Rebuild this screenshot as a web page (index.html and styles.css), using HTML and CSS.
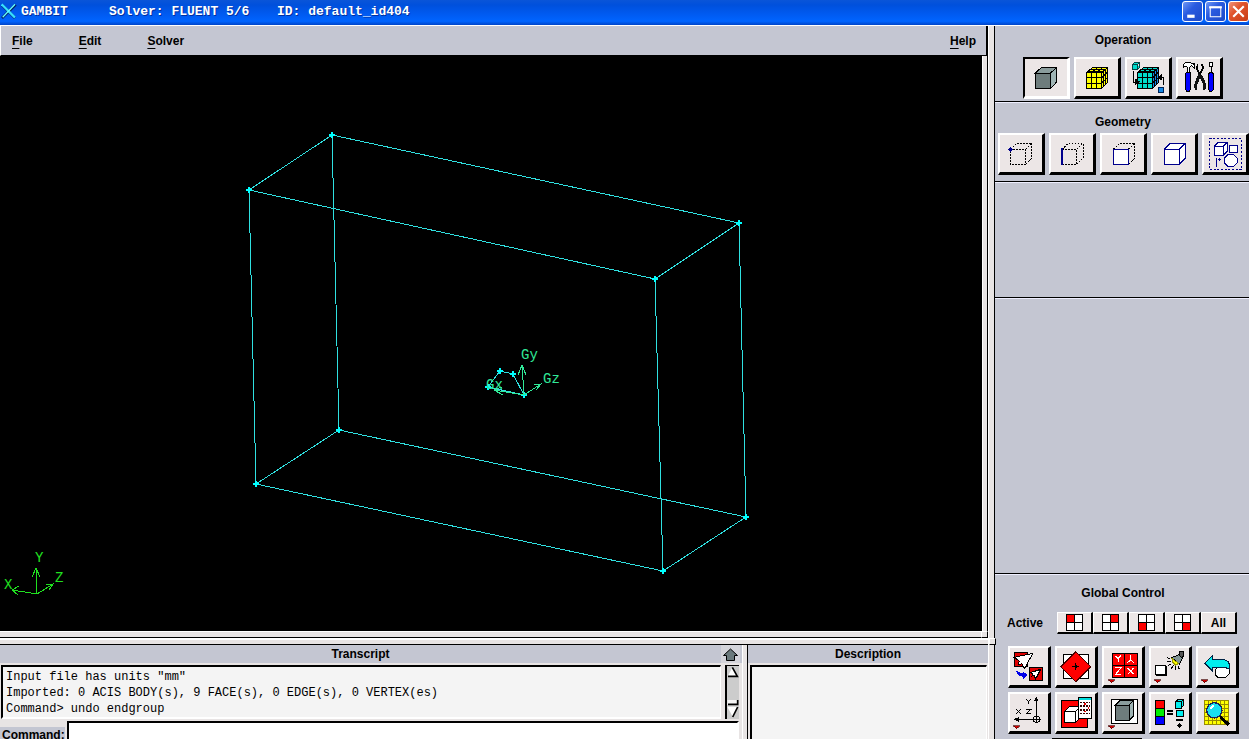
FILE: index.html
```html
<!DOCTYPE html>
<html lang="en">
<head>
<meta charset="utf-8">
<title>GAMBIT</title>
<link rel="stylesheet" href="styles.css">
</head>
<body>
<header class="titlebar">
  <svg class="app-icon" viewBox="3 9 48 48" aria-hidden="true"><path d="M6 15L45 54M47 14L6 54" stroke="#021b5c" stroke-width="8"/><path d="M5 13L45 53" stroke="#35dfff" stroke-width="7"/><path d="M45 13L8 52" stroke="#6ff" stroke-width="4"/></svg>
  <h1 class="app-title"><span class="app-name">GAMBIT</span><span class="app-solver">Solver: FLUENT 5/6</span><span>ID: default_id404</span></h1>
  <div class="window-buttons">
    <button class="win-btn" aria-label="Minimize"><svg viewBox="0 0 18 18"><path d="M4 12h7v3H4z" fill="#fff"/></svg></button>
    <button class="win-btn" aria-label="Maximize"><svg viewBox="0 0 18 18"><path d="M4 5h10v9H4z" fill="none" stroke="#fff"/><path d="M3 4h12v2H3z" fill="#fff"/></svg></button>
    <button class="win-btn close" aria-label="Close"><svg viewBox="0 0 18 18"><path d="M4 4l10 10M14 4L4 14" stroke="#fff" stroke-width="2"/></svg></button>
  </div>
</header>
<div class="workspace">
  <main class="left">
    <nav class="menubar">
      <button class="menu"><u>F</u>ile</button>
      <button class="menu"><u>E</u>dit</button>
      <button class="menu"><u>S</u>olver</button>
      <button class="menu help"><u>H</u>elp</button>
    </nav>
    <div class="viewport">
      <svg class="scene" viewBox="0 56 982 575" preserveAspectRatio="xMinYMin slice" role="img" aria-label="Wireframe box">
        <g class="wire">
          <path d="M332 135L249 190L655 279L739 223ZM339 430L256 484L663 571L746 517ZM332 135L339 430M249 190L256 484M739 223L746 517M655 279L663 571"/>
          <path d="M488 387L500 371L513 374L524 395Z"/>
        </g>
        <path class="vertex" d="M329 135h6M332 132v6M246 190h6M249 187v6M736 223h6M739 220v6M652 279h6M655 276v6M336 430h6M339 427v6M253 484h6M256 481v6M743 517h6M746 514v6M660 571h6M663 568v6M485 387h6M488 384v6M497 371h6M500 368v6M510 374h6M513 371v6M521 395h6M524 392v6"/>
        <path class="axis inner" d="M524 395L522 365M518 375L522 365L526 375M524 395L541 384M534 385L541 384L536 390M524 395L494 390M502 387L494 390L503 395"/>
        <path class="axis" d="M37 594L36 568M32 577L36 568L40 577M37 594L53 584M46 585L53 584L49 590M37 594L12 590M19 586L12 590L18 595"/>
        <g class="axis-text inner-text"><text x="486" y="389">Gx</text><text x="521" y="359">Gy</text><text x="543" y="383">Gz</text></g>
        <g class="axis-text"><text x="35" y="562">Y</text><text x="55" y="582">Z</text><text x="4" y="589">X</text></g>
      </svg>
    </div>
    <div class="sash-row"><span class="grip"></span></div>
    <div class="lower">
      <section class="transcript">
        <div class="panel-head"><h2>Transcript</h2><button class="expand" aria-label="Expand transcript"><svg viewBox="0 0 19 17"><path d="M9.5 3L16.500 9.500H13.500V14.500H5.500V9.500H2.500Z" fill="#6b7a7c" stroke="#000"/></svg></button></div>
        <div class="log-row">
          <pre class="log">Input file has units "mm"
Imported: 0 ACIS BODY(s), 9 FACE(s), 0 EDGE(s), 0 VERTEX(es)
Command&gt; undo endgroup</pre>
          <svg class="scroll" viewBox="75 123 42 162" aria-hidden="true"><path d="M75 123h42v162H75z" fill="#ccc"/><path d="M75 123h6v162h-6zM75 123h42v3H75z" fill="#000"/><path d="M84 156L97 130L112 156Z" fill="#fff"/><path d="M97 130L112 157H84" fill="none" stroke="#000" stroke-width="5"/><path d="M82 228h32v15H82z" fill="#f4f4f4"/><path d="M84 241h29v-13" fill="none" stroke="#000" stroke-width="5"/><path d="M82 248H114L98 278Z" fill="#fff"/><path d="M113 249L98 279" stroke="#000" stroke-width="5"/></svg>
        </div>
        <div class="command-row"><label for="command">Command:</label><input id="command" type="text"></div>
      </section>
      <section class="description">
        <div class="panel-head"><h2>Description</h2></div>
        <div class="desc-box"></div>
      </section>
    </div>
  </main>
  <div class="sash-col"><span class="grip"></span></div>
  <aside class="tools">
    <section class="group operation">
      <h2>Operation</h2>
      <div class="row">
        <button class="tool pressed" aria-label="Geometry"><svg viewBox="30 27 126 111"><g stroke="#000" stroke-width="3"><path d="M61 69H107V115H61Z" fill="#6e7c7c"/><path d="M61 69L80 52H125L107 69Z" fill="#8a9c9c"/><path d="M107 69L125 52V96L107 115Z" fill="#9fb4b4"/></g></svg></button>
        <button class="tool" aria-label="Mesh"><svg viewBox="183 27 126 111"><path d="M215 68L233 52H278V98L260 115H215Z" fill="#ff0"/><path d="M215 68H260V115H215ZM215 83H260L278 66M215 99H260L278 82M230 115V68L248 52M245 115V68L263 52M215 68L233 52H278V98L260 115M260 68L278 52M221 63H266V109M227 57H272V104" class="ink"/></svg></button>
        <button class="tool" aria-label="Zones"><svg viewBox="336 27 126 111"><path d="M368 68L386 52H431V98L413 115H368Z" fill="#00dccc"/><path d="M413 68L431 52V98L413 115Z" fill="#1688e4"/><path d="M368 68H413V115H368ZM368 83H413L431 66M368 99H413L431 82M383 115V68L401 52M398 115V68L416 52M368 68L386 52H431V98L413 115M413 68L431 52M374 63H419V109M380 57H425V104" class="ink"/><path d="M353 43H368V58H353ZL359 37H374L368 43M374 37V52L368 58" fill="#00dccc" stroke="#064444" stroke-width="3"/><path d="M356 62V96H364M446 106V82H438" class="ink"/><path d="M361 86L375 95L361 104ZM440 73L427 82L440 91Z"/><path d="M430 112H446V127H430Z" fill="#1688e4" stroke="#025" stroke-width="3"/></svg></button>
        <button class="tool" aria-label="Tools"><svg viewBox="489 27 126 111"><path d="M505 45L511 38H527L536 43V39H537V53L529 47L524 53V66H517V52L511 48L505 53Z" fill="#fff" stroke="#000" stroke-width="3"/><path d="M513 68H527V118L523 123H515L511 118V73Z" fill="#00f" stroke="#000" stroke-width="3"/><path d="M549 43L545 52L549 64L559 74M559 43L565 51L560 64L550 74" fill="none" stroke="#000" stroke-width="5"/><path d="M550 73L542 90L537 106L540 121H546V105L555 85L565 105V121H571L574 106L568 90L560 74Z" fill="#111"/><path d="M584 38H592V50H584ZM588 50V70" fill="#fff" stroke="#000" stroke-width="3"/><path d="M583 68H593L596 75V118L591 123H584L580 118V75Z" fill="#00f" stroke="#000" stroke-width="3"/></svg></button>
      </div>
    </section>
    <section class="group geometry">
      <h2>Geometry</h2>
      <div class="row">
        <button class="tool" aria-label="Vertex"><svg viewBox="27 75 126 111"><path class="dash" d="M58 118H104V163H58ZM58 118L77 100H122L104 118M122 100V145L104 163"/><path d="M58 111L66 118L58 126L50 118Z" fill="#00008c"/></svg></button>
        <button class="tool" aria-label="Edge"><svg viewBox="180 75 126 111"><path class="dash" d="M213 118H256V163H213M213 118L231 100H276L256 118V163L276 145V100"/><path d="M213 114V164" stroke="#00008c" stroke-width="6"/></svg></button>
        <button class="tool" aria-label="Face"><svg viewBox="333 75 126 111"><path class="dash" d="M368 117L386 100H431L413 117M431 100V145L413 163"/><path class="navy" d="M368 118H413V163H368Z"/></svg></button>
        <button class="tool" aria-label="Volume"><svg viewBox="488 75 126 111"><path class="navy" d="M521 118L539 100H584V145L566 163H521ZM521 118H566V163M566 118L584 100"/></svg></button>
        <button class="tool" aria-label="Group"><svg viewBox="641 75 126 111"><path d="M658 85H752V179H658Z" fill="none" stroke="#00008c" stroke-width="3" stroke-dasharray="6 5"/><path class="navy" d="M671 109L683 97H710V124L698 136H671ZM671 109H698V136M698 109L710 97M718 106H740V127H718ZM713 133H729L740 144V159L729 170H713L703 159V144Z"/><path d="M677 145V171M684 149H692M688 145V153" stroke="#00008c" stroke-width="3"/></svg></button>
      </div>
    </section>
    <section class="group blank-small"></section>
    <section class="group blank-large"></section>
    <section class="group global">
      <h2>Global Control</h2>
      <div class="active-row">
        <span class="active-label">Active</span>
        <button class="quad" aria-label="Top left"><svg viewBox="0 0 17 17"><path d="M.5.5h16v16H.5z" fill="#fff"/><path d="M0 0h8v8H0z" fill="#f00"/><path d="M.5.5h16v16H.5zM8.500 0v17M0 8.500h17" class="thin"/></svg></button>
        <button class="quad" aria-label="Top right"><svg viewBox="0 0 17 17"><path d="M.5.5h16v16H.5z" fill="#fff"/><path d="M9 0h8v8H9z" fill="#f00"/><path d="M.5.5h16v16H.5zM8.500 0v17M0 8.500h17" class="thin"/></svg></button>
        <button class="quad" aria-label="Bottom left"><svg viewBox="0 0 17 17"><path d="M.5.5h16v16H.5z" fill="#fff"/><path d="M0 9h8v8H0z" fill="#f00"/><path d="M.5.5h16v16H.5zM8.500 0v17M0 8.500h17" class="thin"/></svg></button>
        <button class="quad" aria-label="Bottom right"><svg viewBox="0 0 17 17"><path d="M.5.5h16v16H.5z" fill="#fff"/><path d="M9 9h8v8H9z" fill="#f00"/><path d="M.5.5h16v16H.5zM8.500 0v17M0 8.500h17" class="thin"/></svg></button>
        <button class="quad">All</button>
      </div>
      <div class="control-grid">
        <button class="tool small" aria-label="Fit to window"><svg viewBox="27 24 114 111"><path d="M40 38H80V78H40Z" fill="#e00000" stroke="#000" stroke-width="3"/><path d="M39 52L96 40L70 86L63 71L51 74L55 63Z" fill="#fff" stroke="#000" stroke-width="3"/><path d="M85 83H125V121H85Z" fill="#e00000" stroke="#000" stroke-width="3"/><path d="M88 98L119 88L104 117L99 106L93 108L95 102Z" fill="#fff" stroke="#000" stroke-width="3"/><path d="M44 90L54 97L66 101V94L79 105L66 118V110L53 106L48 99Z" fill="#0000e8"/></svg></button>
        <button class="tool small" aria-label="Pivot"><svg viewBox="168 24 114 111"><path d="M188 43H261V116H188Z" fill="#fff" stroke="#000" stroke-width="3"/><path d="M224 35L269 80L224 125L179 80Z" fill="#f00" stroke="#400" stroke-width="3"/><path d="M214 80H234M224 70V90" stroke="#000" stroke-width="3"/><path d="M224 74L230 80L224 86L218 80Z"/></svg></button>
        <button class="tool small" aria-label="Configurations"><svg viewBox="309 24 114 111"><path d="M334 40H408V112H334ZM371 40V112M334 76H408" fill="#f00" stroke="#000" stroke-width="3"/><path d="M343 47L351 56L360 47M351 56V67M389 46V60L378 69M389 60L399 69M343 83H360L343 104H361M380 84L398 103M398 84L380 103" fill="none" stroke="#fff" stroke-width="3"/><path class="drop" d="M321 119H343L332 128Z"/></svg></button>
        <button class="tool small" aria-label="Light"><svg viewBox="453 24 114 111"><path d="M467 75H496V104H467Z" fill="#fff" stroke="#000" stroke-width="3"/><path d="M469 106H499V77" class="ink"/><path d="M515 53L540 43L550 50L538 73Z" fill="#829595" stroke="#000" stroke-width="3"/><path d="M539 34H550V48L544 53L538 46Z" fill="#555" stroke="#000" stroke-width="3"/><path d="M516 56L536 70L527 75L517 66Z" fill="#ff0" stroke="#990" stroke-width="3"/><path d="M511 58L502 53M512 65H501M514 71L504 77M520 76L513 87M527 78L526 91M534 77L538 88" class="ink"/><path class="drop" d="M462 119H484L473 128Z"/></svg></button>
        <button class="tool small" aria-label="Undo"><svg viewBox="594 24 114 111"><path d="M646 89L653 83H667L689 76V100L677 112H654L646 105Z" fill="#fff" stroke="#000" stroke-width="3"/><path d="M614 70L637 47V58H669L684 64L690 77L688 87L674 82H637V92Z" fill="#0ee" stroke="#024" stroke-width="3"/><path class="drop" d="M603 119H625L614 128Z"/></svg></button>
        <button class="tool small" aria-label="Orient"><svg viewBox="27 162 114 111"><path d="M106 174V250M40 238H120M106 228L116 232V244L106 248L96 244V232Z" class="ink"/><path d="M106 169L113 184H99ZM38 238L53 231V245Z"/><path d="M76 178L83 184L90 178M83 184V192M46 208L59 221M59 208L46 221M76 208H90L76 221H91" class="ink"/><path class="drop" d="M36 257H58L47 266Z"/></svg></button>
        <button class="tool small" aria-label="Display attributes"><svg viewBox="168 162 114 111"><path d="M181 181H260V261H181Z" fill="#f00" stroke="#000" stroke-width="3"/><path d="M191 214L205 200H235V236L224 247H191ZM191 214H224V247M224 214L235 203" fill="#fff" stroke="#000" stroke-width="3"/><path d="M233 172H271V235H233Z" fill="#fff" stroke="#000" stroke-width="3"/><path d="M234 173H270V179H234Z" fill="#0dd"/><path d="M237 187H243M237 198H243M237 209H243M237 220H243M246 187H268M246 198H268M246 209H268M246 220H268" stroke="#300" stroke-width="5" stroke-dasharray="6 3"/><path d="M250 192H254M260 203H264M250 214H254" stroke="#e00" stroke-width="5"/></svg></button>
        <button class="tool small" aria-label="Render model"><svg viewBox="309 162 114 111"><path d="M331 179H409V251H331Z" fill="#fff" stroke="#000" stroke-width="3"/><g stroke="#000" stroke-width="3"><path d="M344 195H384V242H344Z" fill="#6e7c7c"/><path d="M344 195L358 181H398L384 195Z" fill="#8a9c9c"/><path d="M384 195L398 181V227L384 242Z" fill="#9fb4b4"/></g><path class="drop" d="M321 257H343L332 266Z"/></svg></button>
        <button class="tool small" aria-label="Color mode"><svg viewBox="453 162 114 111"><g stroke="#000" stroke-width="3"><path d="M467 181H494V205H467Z" fill="#f00"/><path d="M467 205H494V230H467Z" fill="#0e0"/><path d="M467 230H494V254H467Z" fill="#00f"/><path d="M527 185L534 179H550V197L544 204H527ZM527 185H544V204M544 185L550 179M529 212H549V230H529Z" fill="#0ee"/></g><path d="M502 213H519M502 222H519M528 240H550" stroke="#000" stroke-width="4"/><path d="M538 249L546 256L538 264L530 256Z"/></svg></button>
        <button class="tool small" aria-label="Examine mesh"><svg viewBox="594 162 114 111"><path d="M613 181H684V252H613Z" fill="#ff0"/><path d="M613 181H684V252H613ZM625 181V252M637 181V252M649 181V252M661 181V252M673 181V252M613 193H684M613 205H684M613 217H684M613 229H684M613 241H684" fill="none" stroke="#998c00" stroke-width="3"/><path d="M661 230L687 255" stroke="#000" stroke-width="9"/><circle cx="643" cy="211" r="23" fill="#19dff0" stroke="#225" stroke-width="4"/><path d="M629 209Q631 196 644 194L640 203Z" fill="#fff"/></svg></button>
      </div>
      <div class="next-edge"></div>
    </section>
  </aside>
</div>
</body>
</html>
```

FILE: styles.css
```css
* { box-sizing: border-box; }
body {
  margin: 0;
  height: 100vh;
  display: flex;
  flex-direction: column;
  overflow: hidden;
  background: #c4c6d2;
  color: #000;
  font: bold 12px/16px "Liberation Sans", Arial, sans-serif;
}
button { margin: 0; padding: 0; border: 0; font: inherit; color: inherit; background: none; }
svg { display: block; }
h1, h2 { margin: 0; font: inherit; }

.titlebar {
  flex: none;
  height: 25px;
  display: flex;
  align-items: flex-start;
  background: linear-gradient(#0a55d8, #0050dc 20%, #005af0 55%, #0064ff 85%, #0044c8);
  color: #fff;
}
.app-icon { width: 16px; height: 16px; margin: 3px 4px 0 1px; }
.app-title { flex: 1; display: flex; font: bold 13px/24px "Liberation Mono", monospace; white-space: nowrap; text-shadow: 1px 1px #0030a0; }
.app-name { width: 88px; }
.app-solver { width: 168px; }
.window-buttons { display: flex; gap: 2px; padding-top: 1px; }
.win-btn { width: 21px; height: 21px; border: 1px solid #fff; border-radius: 3px; background: linear-gradient(135deg, #6f98f4, #2a5be0 40%, #1c49c8); }
.win-btn.close { background: linear-gradient(135deg, #f0937a, #e0542c 40%, #c83c14); }
.win-btn svg { width: 19px; height: 19px; }

.workspace { flex: 1; min-height: 0; display: flex; border-top: 1px solid #fff; }
.left { flex: 1; min-width: 0; display: flex; flex-direction: column; }
.menubar {
  flex: none;
  height: 30px;
  display: flex;
  align-items: center;
  gap: 46px;
  padding: 0 10px 0 11px;
  border-left: 1px solid #fff;
  border-right: 2px solid #000;
  border-bottom: 1px solid #000;
}
.menu u { text-underline-offset: 3px; text-decoration-thickness: 1px; }
.help { margin-left: auto; }
.viewport {
  flex: 1;
  min-height: 0;
  padding-right: 5px;
  background: #000;
  border-right: 1px solid #000;
  box-shadow: inset -4px 0 #e8e4e4, inset -5px 0 #fff;
}
.scene { width: 100%; height: 100%; }
.wire { fill: none; stroke: #2fe0e0; stroke-width: 1; shape-rendering: crispEdges; }
.vertex { stroke: #00ffff; stroke-width: 2; shape-rendering: crispEdges; }
.axis { fill: none; stroke: #20e020; shape-rendering: crispEdges; }
.axis-text { fill: #20e020; font: 14px "Liberation Mono", monospace; }
.axis.inner { stroke: #30e898; }
.axis-text.inner-text { fill: #30e898; }

.sash-row {
  flex: none;
  position: relative;
  height: 14px;
  background: linear-gradient(#fff 1px, #e8e4e4 1px 6px, #000 6px 7px, #fff 7px 9px, #e8e4e4 9px 13px, #000 13px);
}
.sash-col {
  flex: none;
  position: relative;
  width: 7px;
  background: #e8e4e4;
  border-left: 1px solid #fff;
  border-right: 1px solid #000;
}
.grip { position: absolute; width: 7px; height: 7px; background: #e8e4e4; border: 1px solid #fff; border-right-color: #000; border-bottom-color: #000; }
.sash-row .grip { right: 0; top: 0; }
.sash-col .grip { right: -2px; bottom: 94px; }

.lower { flex: 0 0 94px; overflow: hidden; display: flex; background: #e8e4e4; }
.panel-head { display: flex; height: 18px; background: #c4c6d2; }
.panel-head h2 { flex: 1; text-align: center; line-height: 18px; }
.transcript { flex: 1; min-width: 0; border-right: 1px solid #fff; }
.transcript .panel-head { padding-right: 2px; }
.expand { width: 19px; height: 18px; background: #d4d4da; }
.expand svg { width: 19px; height: 17px; }
.log-row { display: flex; gap: 4px; padding: 2px 3px 1px 1px; }
.log {
  flex: 1;
  margin: 0;
  height: 54px;
  padding: 2px 3px 0;
  background: #f4f4f4;
  border: 2px solid #000;
  border-right: 1px solid #fff;
  border-bottom-color: #fff;
  font: 12px/16px "Liberation Mono", monospace;
}
.scroll { width: 14px; height: 54px; }
.command-row { display: flex; padding: 1px 3px 0 0; }
.command-row label { width: 65px; margin: 6px 2px 0 0; padding-left: 2px; background: #c4c6d2; }
.command-row input { flex: 1; min-width: 0; height: 24px; border: 2px solid #000; border-right-color: #fff; border-bottom-color: #fff; border-radius: 0; background: #fff; font: 12px/16px "Liberation Mono", monospace; }
.description { flex: 0 0 241px; display: flex; flex-direction: column; border-left: 1px solid #000; margin-left: 4px; }
.description .panel-head { flex: none; }
.desc-box { flex: 1; margin: 2px 1px 0 2px; background: #f4f4f4; border: 2px solid #000; border-right: 1px solid #fff; border-bottom: 0; }

.tools { flex: 0 0 254px; display: flex; flex-direction: column; background: #c4c6d2; text-align: center; }
.group { flex: none; padding-left: 2px; border-bottom: 1px solid #000; border-top: 1px solid #eef; }
.operation { height: 76px; padding-top: 6px; border-top: 0; }
.geometry { height: 80px; padding-top: 11px; }
.blank-small { height: 116px; }
.blank-large { flex: 1; min-height: 0; }
.global { padding-top: 10px; border-bottom: 0; }
.row { display: flex; justify-content: center; gap: 4px; }
.operation .row { margin-top: 9px; }
.geometry .row { margin-top: 3px; }
.tool {
  width: 47px;
  height: 42px;
  flex: none;
  background: #ece6e6;
  border: solid #fff;
  border-width: 2px 3px 3px 2px;
  border-right-color: #000;
  border-bottom-color: #000;
}
.tool.pressed { border-color: #000 #fff #fff #000; }
.tool svg { width: 100%; height: 100%; shape-rendering: crispEdges; }
.tool.small { width: 43px; }
.active-row { display: flex; align-items: center; margin: 11px 10px 12px; }
.active-label { width: 50px; text-align: left; }
.quad {
  flex: none;
  width: 36px;
  height: 22px;
  display: flex;
  align-items: center;
  justify-content: center;
  background: #ece6e6;
  border: solid #fff;
  border-width: 1px 2px 2px 1px;
  border-right-color: #000;
  border-bottom-color: #000;
}
.quad svg { width: 17px; height: 17px; shape-rendering: crispEdges; }
.control-grid { display: grid; grid-template-columns: repeat(5, 43px); gap: 4px; justify-content: center; }
.next-edge { width: 90px; margin: 4px 0 0 55px; border-top: 1px solid #000; }
.ink { fill: none; stroke: #000; stroke-width: 3; }
.thin { fill: none; stroke: #000; }
.dash { fill: none; stroke: #000; stroke-width: 3; stroke-dasharray: 5 4; }
.navy { fill: #fff; stroke: #00008c; stroke-width: 3; }
.drop { fill: #d00000; stroke: #400; stroke-width: 2; }
```
